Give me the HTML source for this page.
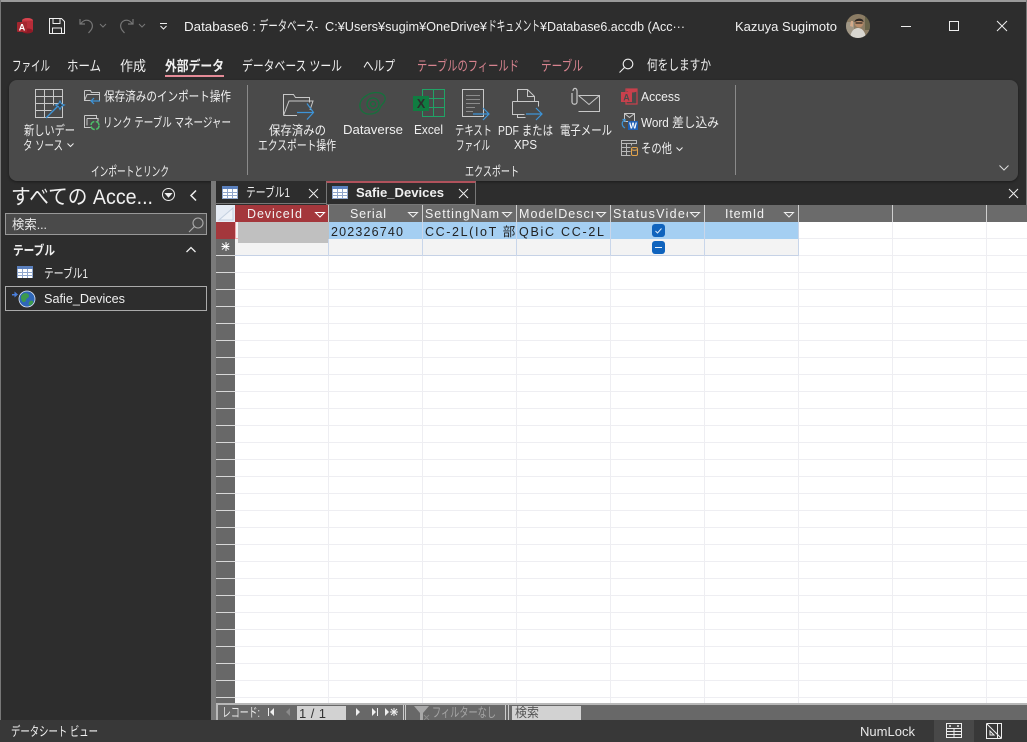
<!DOCTYPE html>
<html lang="ja"><head><meta charset="utf-8"><style>
html,body{margin:0;padding:0;width:1027px;height:742px;overflow:hidden;background:#fff}
body{position:relative;font-family:"Liberation Sans","Noto Sans CJK JP",sans-serif;color:#f0f0f0;font-size:12px}
.a{position:absolute}
svg{position:absolute;overflow:visible}
#o{left:0;top:0;overflow:hidden}
#o svg{overflow:hidden}
#o text{font-family:"Liberation Sans","Noto Sans CJK JP",sans-serif;fill:#f0f0f0;font-size:13px;white-space:pre}
#o .m{font-size:13px}
#o .j{font-size:14px}
#o .h{font-size:12.500px;fill:#f2f2f2}
#o .d{font-size:12.500px;fill:#222}
#o .p{font-size:14px;fill:#d7838f}
</style></head><body>
<!-- window -->
<div class="a" style="left:0;top:0;width:1027px;height:742px;background:#2d2d2d"></div>
<div class="a" style="left:0;top:0;width:1027px;height:2px;background:#9a9a9a"></div>
<div class="a" style="left:0;top:0;width:1px;height:742px;background:#777"></div>
<div class="a" style="left:1026px;top:0;width:1px;height:742px;background:#777"></div>

<!-- title bar icons -->
<svg style="left:16px;top:17px" width="18" height="18" viewBox="0 0 18 18"><ellipse cx="11.500" cy="3.500" rx="5.500" ry="2.500" fill="#d9434e"/><rect x="6" y="3.500" width="11" height="11" fill="#b72c38"/><ellipse cx="11.500" cy="14" rx="5.500" ry="2.500" fill="#8e1a26"/><rect x="1" y="5" width="10" height="10" rx="1" fill="#a4262f"/><text x="6" y="13.500" font-size="9" font-weight="bold" fill="#fff" text-anchor="middle" font-family="Liberation Sans">A</text></svg>
<svg style="left:49px;top:18px" width="16" height="16" viewBox="0 0 16 16" fill="none" stroke="#f0f0f0" stroke-width="1"><path d="M.5.500h12l3 3v12H.500z"/><path d="M4 .5v5h7v-5M3.500 15.500v-5.500h9v5.500"/></svg>
<svg style="left:79px;top:18px" width="16" height="16" viewBox="0 0 16 16" fill="none" stroke="#777" stroke-width="1.200"><path d="M1 1v5h5M1.500 6c2-3 5-4.500 8-3.500 4 1.500 5 6 2.500 9.500l-2.500 3"/></svg>
<svg style="left:99px;top:23px" width="8" height="5" fill="none" stroke="#777"><path d="M1 1l3 3 3-3"/></svg>
<svg style="left:118px;top:18px" width="16" height="16" viewBox="0 0 16 16" fill="none" stroke="#777" stroke-width="1.200"><path d="M15 1v5h-5M14.500 6c-2-3-5-4.500-8-3.500-4 1.500-5 6-2.500 9.500l2.500 3"/></svg>
<svg style="left:138px;top:23px" width="8" height="5" fill="none" stroke="#777"><path d="M1 1l3 3 3-3"/></svg>
<svg style="left:159px;top:23px" width="9" height="7" fill="none" stroke="#eee"><path d="M1 .5h7M1.500 3l3 3 3-3"/></svg>
<svg style="left:846px;top:14px" width="24" height="24" viewBox="0 0 24 24"><clipPath id="av"><circle cx="12" cy="12" r="12"/></clipPath><g clip-path="url(#av)"><rect width="24" height="24" fill="#8b7c64"/><path d="M0 8h8v16H0z" fill="#a9a294" opacity=".7"/><path d="M19 0h5v16h-5z" fill="#5a5a3e" opacity=".7"/><path d="M4 24c1-8 5-10 8-10s7 2 8 10z" fill="#d8d6d0"/><circle cx="13" cy="9" r="4.500" fill="#b98c6a"/><path d="M8.500 8c0-4 9-5 9 0-3-1.500-6-1.500-9 0z" fill="#2b2622"/><path d="M9.500 9h7" stroke="#2b2622" stroke-width="1.200"/><path d="M4 12l1-5 2 0 0 6z" fill="#d3aa8a"/></g></svg>
<div class="a" style="left:901px;top:26px;width:10px;height:1px;background:#eee"></div>
<div class="a" style="left:949px;top:21px;width:8px;height:8px;border:1px solid #eee"></div>
<svg style="left:997px;top:21px" width="10" height="10" stroke="#eee" stroke-width="1"><path d="M0 0l10 10M10 0L0 10"/></svg>

<div class="a" style="left:165px;top:75px;width:59px;height:2px;background:#e58b97"></div>
<svg style="left:619px;top:58px" width="15" height="15" fill="none" stroke="#eee" stroke-width="1.100"><circle cx="9" cy="6" r="4.800"/><path d="M5.500 9.500L.5 14.500"/></svg>

<!-- ribbon -->
<div class="a" style="left:9px;top:80px;width:1009px;height:101px;background:#4a4a4a;border-radius:8px;box-shadow:0 1px 2px #1c1c1c"></div>
<div class="a" style="left:247px;top:85px;width:1px;height:90px;background:#8a8a8a"></div>
<div class="a" style="left:735px;top:85px;width:1px;height:90px;background:#8a8a8a"></div>

<svg style="left:35px;top:89px" width="31" height="31" fill="none" stroke="#c8c8c8"><path d="M.5.500h27v28H.500zM.5 7.500h27M.5 14.500h27M.5 21.500h16M9.500.5v28M18.500.5v16"/><path d="M11 29l13-13" stroke="#3d94d8" stroke-width="1.300"/><path d="M25 12l1.500 3 3 1-3 1.500-1.500 3-1.500-3-3-1.500 3-1z" stroke="#3d94d8" fill="#3a3f44"/></svg>
<svg style="left:67px;top:143px" width="7" height="4" fill="none" stroke="#eee"><path d="M.5.500l3 3 3-3"/></svg>
<svg style="left:84px;top:89px" width="17" height="15" fill="none" stroke="#c8c8c8"><path d="M.5 1.500h6l1 2h8v8M.5 1.500v10h6M.5 11.500l2.500-6h13"/><path d="M16 12H7M10 9l-3 3 3 3" stroke="#3d94d8" stroke-width="1.200"/></svg>
<svg style="left:84px;top:114px" width="16" height="16" fill="none" stroke="#c8c8c8"><path d="M.5 1.500h12v3M.5 1.500v12h6M3 4.500h11v3M3 4.500v7"/><circle cx="11" cy="11.500" r="4" stroke="#4cc169" stroke-width="1.500" stroke-dasharray="5 1.500"/></svg>

<svg style="left:283px;top:93px" width="31" height="26" fill="none" stroke="#c8c8c8"><path d="M.5 22.500V1.500h10l2 3h14v5M.5 22.500L6 8h24l-3 9M.5 22.500H14"/><path d="M14 20h16M24 11l6.500 9-6.500 7" stroke="#3d94d8" stroke-width="1.200" transform="translate(0,-.5)"/></svg>

<svg style="left:358px;top:91px" width="30" height="26" fill="none" stroke="#16703c" stroke-width="1.300"><path d="M8 5C15-1 29 1 27 9c-1 4-4 4-5 8-2 6-12 8-17 4C0 17 1 9 8 5z"/><circle cx="15" cy="13" r="6"/><circle cx="15" cy="13" r="2.500"/></svg>
<svg style="left:413px;top:89px" width="32" height="28" fill="none"><path d="M9.500.5h22v27h-22z" stroke="#21a366"/><path d="M9.500 9.500h22M9.500 18.500h22M20.500.5v27" stroke="#21a366"/><rect x="0" y="7" width="16" height="15" fill="#107c41"/><text x="8" y="19" font-size="12.500" font-weight="bold" fill="#2d2d2d" text-anchor="middle" font-family="Liberation Sans">X</text></svg>
<svg style="left:462px;top:89px" width="28" height="30" fill="none"><path d="M.5.500h21v27H.500z" stroke="#c8c8c8"/><path d="M4 6.500h14M4 10.500h14M4 14.500h14M4 18.500h9M4 22.500h7" stroke="#8c8c8c"/><path d="M11 25h16M21 19l6 6-6 6" stroke="#3d94d8" stroke-width="1.200"/></svg>
<svg style="left:512px;top:89px" width="32" height="30" fill="none"><path d="M5.500 12.500V.5h10l7 7v5M15.500.5v7h7" stroke="#c8c8c8"/><path d="M.5 12.500h26v5M.5 12.500v13h12M5.500 25.500v3h8" stroke="#c8c8c8"/><path d="M14 25h16M24 19l6 6-6 6" stroke="#3d94d8" stroke-width="1.200"/></svg>
<svg style="left:570px;top:87px" width="31" height="26" fill="none" stroke="#c8c8c8"><path d="M8.500 8.500h21v16h-21M8.500 8.500l10.500 9 10.500-9"/><path d="M3 4C3 .5 7 .5 7 4v11c0 3-5 3-5 0V6" stroke-width="1.200"/></svg>
<svg style="left:621px;top:88px" width="17" height="17"><rect x="5" y="1" width="11" height="15" fill="none" stroke="#c9404c" stroke-width="1.200"/><ellipse cx="11" cy="2.500" rx="5.500" ry="2" fill="#c9404c"/><rect x="0" y="4" width="11" height="10" fill="#c9404c"/><text x="5.500" y="12.500" font-size="9" font-weight="bold" fill="#4a4a4a" text-anchor="middle" font-family="Liberation Sans">A</text></svg>
<svg style="left:621px;top:113px" width="17" height="18" fill="none"><path d="M3.500 .5h10v8h-10zM3.500.5l5 4 5-4" stroke="#c8c8c8"/><path d="M4 15C.5 13 .5 9 3 7.500M1.500 6.500h2.500v2.500" stroke="#3d94d8" stroke-width="1.200"/><rect x="7" y="8" width="10" height="9" fill="#1e5fb4"/><text x="12" y="15.500" font-size="8" font-weight="bold" fill="#fff" text-anchor="middle" font-family="Liberation Sans">W</text></svg>
<svg style="left:621px;top:140px" width="17" height="16" fill="none"><path d="M.5.500h15v3H.5zM.5 3.500v12h9M.5 7.500h9M.5 11.500h9M5.500 3.500v12M10.500 3.500v2" stroke="#b8b8b8"/><rect x="10.500" y="7.500" width="6" height="8" rx="1.500" stroke="#e3a44c"/><path d="M10.500 9.500c1 1 5 1 6 0" stroke="#e3a44c"/></svg>
<svg style="left:676px;top:147px" width="7" height="4" fill="none" stroke="#eee"><path d="M.5.500l3 3 3-3"/></svg>
<svg style="left:999px;top:165px" width="10" height="6" fill="none" stroke="#ddd"><path d="M.5.500l4.500 4.500 4.500-4.500"/></svg>

<!-- splitter and tab strip -->
<div class="a" style="left:211px;top:181px;width:5px;height:539px;background:#7a7a7a"></div>
<div class="a" style="left:216px;top:181px;width:111px;height:23px;box-sizing:border-box;border-right:1px solid #777;border-bottom:1px solid #777;background:#2d2d2d"></div>
<div class="a" style="left:326px;top:181px;width:150px;height:24px;box-sizing:border-box;border:1px solid #777;border-top:2px solid #b0525c;background:#2d2d2d"></div>
<svg style="left:222px;top:186px" width="16" height="13"><rect width="16" height="13" fill="#fff"/><rect width="16" height="3" fill="#5b80bd"/><path d="M.5 3v10M5.500 3v10M10.500 3v10M15.500 3v10M0 6.500h16M0 9.500h16M0 12.500h16" stroke="#8fa6cc"/></svg>
<svg style="left:309px;top:189px" width="9" height="9" stroke="#eee"><path d="M0 0l9 9M9 0L0 9"/></svg>
<svg style="left:332px;top:186px" width="16" height="13"><rect width="16" height="13" fill="#fff"/><rect width="16" height="3" fill="#5b80bd"/><path d="M.5 3v10M5.500 3v10M10.500 3v10M15.500 3v10M0 6.500h16M0 9.500h16M0 12.500h16" stroke="#8fa6cc"/></svg>
<svg style="left:459px;top:189px" width="9" height="9" stroke="#eee"><path d="M0 0l9 9M9 0L0 9"/></svg>
<svg style="left:1009px;top:189px" width="9" height="9" stroke="#eee"><path d="M0 0l9 9M9 0L0 9"/></svg>

<!-- nav pane -->
<svg style="left:162px;top:188px" width="13" height="13" fill="none" stroke="#eee"><circle cx="6.500" cy="6.500" r="6"/><path d="M3.500 5.500h6L6.500 9z" fill="#eee"/></svg>
<svg style="left:190px;top:190px" width="7" height="11" fill="none" stroke="#eee" stroke-width="1.500"><path d="M6 .5L1 5.500l5 5"/></svg>
<div class="a" style="left:5px;top:213px;width:202px;height:22px;box-sizing:border-box;background:#4a4a4a;border:1px solid #999"></div>
<svg style="left:188px;top:217px" width="16" height="16" fill="none" stroke="#aaa" stroke-width="1.100"><circle cx="10" cy="6" r="5"/><path d="M6.500 9.500L1 15"/></svg>
<svg style="left:186px;top:247px" width="10" height="6" fill="none" stroke="#eee" stroke-width="1.300"><path d="M.5 5L5 .5 9.500 5"/></svg>
<svg style="left:17px;top:266px" width="16" height="12"><rect width="16" height="12" fill="#fff"/><rect width="16" height="3" fill="#5b80bd"/><path d="M.5 3v9M5.500 3v9M10.500 3v9M15.500 3v9M0 6.500h16M0 9.500h16" stroke="#8fa6cc"/></svg>
<div class="a" style="left:5px;top:286px;width:202px;height:25px;box-sizing:border-box;border:1px solid #aaa"></div>
<svg style="left:12px;top:290px" width="24" height="18"><path d="M0 4h2.500V1.500L6 4.500 2.500 7.500V5.500H0z" fill="#4a7fdc"/><circle cx="15" cy="9" r="8" fill="#2f67b8" stroke="#dfe8f5" stroke-width=".8"/><path d="M11 4c3-2 6 0 6 2s-3 2-3 4-3 3-4 1-2-5 1-7zM18 11c2-1 4 0 3 2s-3 3-4 2 0-3 1-4z" fill="#3d9a4d"/></svg>

<!-- datasheet -->
<div class="a" style="left:216px;top:205px;width:811px;height:500px;background:#fff"></div>
<div class="a" style="left:216px;top:205px;width:811px;height:17px;background:#6b6b6b"></div>
<div class="a" style="left:216px;top:222px;width:19px;height:483px;background:repeating-linear-gradient(#686868 0 16px,#d8d8d8 16px 17px)"></div>
<div class="a" style="left:235px;top:222px;width:792px;height:483px;background:repeating-linear-gradient(#fff 0 16px,#eeeef2 16px 17px)"></div>
<div class="a" style="left:328px;top:256px;width:1px;height:449px;background:#eeeef2"></div>
<div class="a" style="left:422px;top:256px;width:1px;height:449px;background:#eeeef2"></div>
<div class="a" style="left:516px;top:256px;width:1px;height:449px;background:#eeeef2"></div>
<div class="a" style="left:610px;top:256px;width:1px;height:449px;background:#eeeef2"></div>
<div class="a" style="left:704px;top:256px;width:1px;height:449px;background:#eeeef2"></div>
<div class="a" style="left:798px;top:222px;width:1px;height:483px;background:#eeeef2"></div>
<div class="a" style="left:892px;top:222px;width:1px;height:483px;background:#eeeef2"></div>
<div class="a" style="left:986px;top:222px;width:1px;height:483px;background:#eeeef2"></div>

<!-- corner -->
<div class="a" style="left:216px;top:205px;width:19px;height:17px;background:#e6ecf5"></div>
<svg style="left:216px;top:205px" width="19" height="17"><path d="M3 15L17 3v12z" fill="#eef2f8" stroke="#c4d0e0"/></svg>
<!-- header -->
<div class="a" style="left:235px;top:205px;width:93px;height:17px;background:#a4373c"></div>
<div class="a" style="left:328px;top:205px;width:1px;height:17px;background:#cfcfcf"></div>
<div class="a" style="left:422px;top:205px;width:1px;height:17px;background:#cfcfcf"></div>
<div class="a" style="left:516px;top:205px;width:1px;height:17px;background:#cfcfcf"></div>
<div class="a" style="left:610px;top:205px;width:1px;height:17px;background:#cfcfcf"></div>
<div class="a" style="left:704px;top:205px;width:1px;height:17px;background:#cfcfcf"></div>
<div class="a" style="left:798px;top:205px;width:1px;height:17px;background:#cfcfcf"></div>
<div class="a" style="left:892px;top:205px;width:1px;height:17px;background:#cfcfcf"></div>
<div class="a" style="left:986px;top:205px;width:1px;height:17px;background:#cfcfcf"></div>
<svg style="left:315px;top:212px" width="11" height="6"><path d="M.5.500h9L5 5z" fill="none" stroke="#fff"/></svg>
<svg style="left:408px;top:212px" width="11" height="6"><path d="M.5.500h9L5 5z" fill="none" stroke="#eee"/></svg>
<svg style="left:502px;top:212px" width="11" height="6"><path d="M.5.500h9L5 5z" fill="none" stroke="#eee"/></svg>
<svg style="left:596px;top:212px" width="11" height="6"><path d="M.5.500h9L5 5z" fill="none" stroke="#eee"/></svg>
<svg style="left:690px;top:212px" width="11" height="6"><path d="M.5.500h9L5 5z" fill="none" stroke="#eee"/></svg>
<svg style="left:784px;top:212px" width="11" height="6"><path d="M.5.500h9L5 5z" fill="none" stroke="#eee"/></svg>

<!-- rows -->
<div class="a" style="left:216px;top:222px;width:19px;height:17px;background:#a4373c"></div>
<div class="a" style="left:216px;top:239px;width:19px;height:16px;background:#686868"></div>
<svg style="left:221px;top:242px" width="10" height="10" stroke="#fff" fill="none"><path d="M5 0v9M1 1.500l7 6M8 1.500l-7 6M.5 4.500h8"/></svg>
<div class="a" style="left:329px;top:222px;width:470px;height:17px;background:#a5cff2"></div>
<div class="a" style="left:235px;top:239px;width:564px;height:17px;box-sizing:border-box;background:#f3f3f3;border-bottom:1px solid #c6d2e6"></div>
<div class="a" style="left:235px;top:222px;width:94px;height:17px;box-sizing:border-box;background:#f3f3f3;border:1px solid #f0a9ae;border-top:0"></div>
<div class="a" style="left:238px;top:222px;width:91px;height:21px;background:#c0c0c0"></div>
<div class="a" style="left:422px;top:222px;width:1px;height:34px;background:#c9d6ea"></div>
<div class="a" style="left:516px;top:222px;width:1px;height:34px;background:#c9d6ea"></div>
<div class="a" style="left:610px;top:222px;width:1px;height:34px;background:#c9d6ea"></div>
<div class="a" style="left:704px;top:222px;width:1px;height:34px;background:#c9d6ea"></div>
<div class="a" style="left:798px;top:222px;width:1px;height:34px;background:#c9d6ea"></div>
<div class="a" style="left:328px;top:239px;width:1px;height:17px;background:#c9d6ea"></div>
<div class="a" style="left:652px;top:224px;width:13px;height:13px;background:#0f63bd;border-radius:3px"></div>
<svg style="left:652px;top:224px" width="13" height="13" fill="none" stroke="#d8e8f8" stroke-width="1"><path d="M3.500 7l2 2 4-4.500"/></svg>
<div class="a" style="left:652px;top:241px;width:13px;height:13px;background:#0f63bd;border-radius:3px"></div>
<div class="a" style="left:655px;top:247px;width:7px;height:1px;background:#e8f0fa"></div>

<!-- record nav -->
<div class="a" style="left:216px;top:703px;width:811px;height:2px;background:#b8b8b8"></div>
<div class="a" style="left:216px;top:705px;width:811px;height:15px;background:#686868"></div>
<div class="a" style="left:216px;top:705px;width:2px;height:15px;background:#b8b8b8"></div>
<div class="a" style="left:403px;top:705px;width:1px;height:15px;background:#ccc"></div>
<div class="a" style="left:405px;top:705px;width:1px;height:15px;background:#ccc"></div>
<div class="a" style="left:505px;top:705px;width:1px;height:15px;background:#ccc"></div>
<div class="a" style="left:508px;top:705px;width:1px;height:15px;background:#ccc"></div>
<svg style="left:268px;top:708px" width="8" height="9" fill="#eee"><rect width="1" height="8" x="0"/><path d="M6 0v8L2 4z"/></svg>
<svg style="left:285px;top:708px" width="6" height="9" fill="#8a8a8a"><path d="M5 0v8L1 4z"/></svg>
<div class="a" style="left:297px;top:706px;width:49px;height:14px;background:#d2d2d2"></div>
<svg style="left:355px;top:708px" width="6" height="9" fill="#eee"><path d="M1 0v8l4-4z"/></svg>
<svg style="left:371px;top:708px" width="8" height="9" fill="#eee"><path d="M1 0v8l4-4z"/><rect x="6" width="1" height="8"/></svg>
<svg style="left:385px;top:708px" width="13" height="9" fill="#eee"><path d="M0 0v8l4-4z"/><path d="M6 1l6 6M12 1L6 7M9 0v8M5 4h8" stroke="#eee" fill="none"/></svg>
<svg style="left:414px;top:706px" width="17" height="14"><path d="M0 0h15L9 7v7H6V7z" fill="#a8a8a8"/><path d="M10 9l5 5M15 9l-5 5" stroke="#8a8a8a"/></svg>
<div class="a" style="left:512px;top:706px;width:69px;height:14px;background:#d2d2d2"></div>

<!-- status bar -->
<div class="a" style="left:0;top:720px;width:1027px;height:22px;background:#383838"></div>
<div class="a" style="left:934px;top:720px;width:40px;height:22px;background:#484848"></div>
<svg style="left:946px;top:723px" width="16" height="15" fill="none" stroke="#eee"><path d="M.5.500h15v14H.500zM.5 5.500h15M.5 8.500h15M.5 11.500h15M8 5.500v9"/><path d="M3 3h2M11 3h2" stroke-width="1.500"/></svg>
<svg style="left:986px;top:723px" width="16" height="16" fill="none" stroke="#eee"><path d="M.5.500l15 15M.5.500v15h15M.5.500h15v15M11.500.5v15"/><path d="M4 8l4 4H4z"/></svg>

<!-- all text, fitted to measured widths -->
<svg id="o" width="1027" height="742" style="width:1027px;height:742px">
<text class="m" x="184" y="31" textLength="72" lengthAdjust="spacingAndGlyphs">Database6 :</text>
<text class="j" x="259" y="31" textLength="59" lengthAdjust="spacingAndGlyphs">データベース-</text>
<text class="m" x="325" y="31" textLength="162" lengthAdjust="spacingAndGlyphs">C:¥Users¥sugim¥OneDrive¥</text>
<text class="j" x="488" y="31" textLength="52" lengthAdjust="spacingAndGlyphs">ドキュメント</text>
<text class="m" x="540" y="31" textLength="145" lengthAdjust="spacingAndGlyphs">¥Database6.accdb (Acc···</text>
<text class="m" x="735" y="31" textLength="102" lengthAdjust="spacingAndGlyphs">Kazuya Sugimoto</text>

<text class="j" x="12" y="71" textLength="38" lengthAdjust="spacingAndGlyphs">ファイル</text>
<text class="j" x="67" y="71" textLength="34" lengthAdjust="spacingAndGlyphs">ホーム</text>
<text class="j" x="120" y="71" textLength="26" lengthAdjust="spacingAndGlyphs">作成</text>
<text class="j" x="165" y="71" textLength="59" lengthAdjust="spacingAndGlyphs" style="font-weight:bold">外部データ</text>
<text class="j" x="242" y="71" textLength="100" lengthAdjust="spacingAndGlyphs">データベース ツール</text>
<text class="j" x="363" y="71" textLength="32" lengthAdjust="spacingAndGlyphs">ヘルプ</text>
<text class="p" x="417" y="71" textLength="102" lengthAdjust="spacingAndGlyphs">テーブルのフィールド</text>
<text class="p" x="541" y="71" textLength="42" lengthAdjust="spacingAndGlyphs">テーブル</text>
<text class="j" x="647" y="70" textLength="64" lengthAdjust="spacingAndGlyphs">何をしますか</text>

<text x="24" y="135" textLength="51" lengthAdjust="spacingAndGlyphs">新しいデー</text>
<text x="23" y="150" textLength="40" lengthAdjust="spacingAndGlyphs">タ ソース</text>
<text x="104" y="101" textLength="127" lengthAdjust="spacingAndGlyphs">保存済みのインポート操作</text>
<text x="103" y="127" textLength="128" lengthAdjust="spacingAndGlyphs">リンク テーブル マネージャー</text>
<text x="91" y="176" textLength="78" lengthAdjust="spacingAndGlyphs">インポートとリンク</text>

<text x="269" y="135" textLength="57" lengthAdjust="spacingAndGlyphs">保存済みの</text>
<text x="258" y="150" textLength="78" lengthAdjust="spacingAndGlyphs">エクスポート操作</text>
<text x="343" y="134" textLength="60" lengthAdjust="spacingAndGlyphs">Dataverse</text>
<text x="414" y="134" textLength="29" lengthAdjust="spacingAndGlyphs">Excel</text>
<text x="455" y="135" textLength="37" lengthAdjust="spacingAndGlyphs">テキスト</text>
<text x="456" y="150" textLength="34" lengthAdjust="spacingAndGlyphs">ファイル</text>
<text x="498" y="135" textLength="55" lengthAdjust="spacingAndGlyphs">PDF または</text>
<text x="514" y="149" textLength="23" lengthAdjust="spacingAndGlyphs">XPS</text>
<text x="560" y="135" textLength="52" lengthAdjust="spacingAndGlyphs">電子メール</text>
<text x="641" y="101" textLength="39" lengthAdjust="spacingAndGlyphs">Access</text>
<text x="641" y="127" textLength="78" lengthAdjust="spacingAndGlyphs">Word 差し込み</text>
<text x="641" y="153" textLength="31" lengthAdjust="spacingAndGlyphs">その他</text>
<text x="465" y="176" textLength="54" lengthAdjust="spacingAndGlyphs">エクスポート</text>

<text x="246" y="197" textLength="44" lengthAdjust="spacingAndGlyphs">テーブル1</text>
<text x="356" y="197" textLength="88" lengthAdjust="spacingAndGlyphs" style="font-weight:bold">Safie_Devices</text>

<text x="11" y="204" textLength="142" lengthAdjust="spacingAndGlyphs" style="font-size:21px">すべての Acce...</text>
<text x="12" y="229" textLength="35" lengthAdjust="spacingAndGlyphs" style="fill:#e8e8e8">検索...</text>
<text x="13" y="255" textLength="42" lengthAdjust="spacingAndGlyphs" style="font-weight:bold">テーブル</text>
<text x="44" y="278" textLength="44" lengthAdjust="spacingAndGlyphs">テーブル1</text>
<text x="44" y="303" textLength="81" lengthAdjust="spacingAndGlyphs">Safie_Devices</text>

<text class="h" x="247" y="218" textLength="55" lengthAdjust="spacing">DeviceId</text>
<text class="h" x="350" y="218" textLength="36" lengthAdjust="spacing">Serial</text>
<text class="h" x="425" y="218" textLength="74" lengthAdjust="spacing">SettingNam</text>
<svg x="519" y="205" width="74" height="17"><text class="h" x="0" y="13" textLength="76" lengthAdjust="spacing">ModelDescr</text></svg>
<svg x="613" y="205" width="75" height="17"><text class="h" x="0" y="13" textLength="80" lengthAdjust="spacing">StatusVideo</text></svg>
<text class="h" x="725" y="218" textLength="39" lengthAdjust="spacing">ItemId</text>

<text class="d" x="331" y="236" textLength="72" lengthAdjust="spacing">202326740</text>
<svg x="425" y="222" width="91" height="17"><text class="d" x="0" y="14" textLength="96" lengthAdjust="spacing">CC-2L(IoT 部(</text></svg>
<text class="d" x="519" y="236" textLength="85" lengthAdjust="spacing">QBiC CC-2L</text>

<text x="222" y="717" textLength="38" lengthAdjust="spacingAndGlyphs" style="fill:#e8e8e8">レコード:</text>
<text x="299" y="718" textLength="27" lengthAdjust="spacing" style="fill:#333">1 / 1</text>
<text x="432" y="717" textLength="64" lengthAdjust="spacingAndGlyphs" style="fill:#a4a4a4">フィルターなし</text>
<text x="515" y="717" textLength="24" lengthAdjust="spacingAndGlyphs" style="fill:#555">検索</text>

<text x="11" y="736" textLength="87" lengthAdjust="spacingAndGlyphs">データシート ビュー</text>
<text x="860" y="736" textLength="55" lengthAdjust="spacingAndGlyphs" style="fill:#e8e8e8">NumLock</text>
</svg>
</body></html>
